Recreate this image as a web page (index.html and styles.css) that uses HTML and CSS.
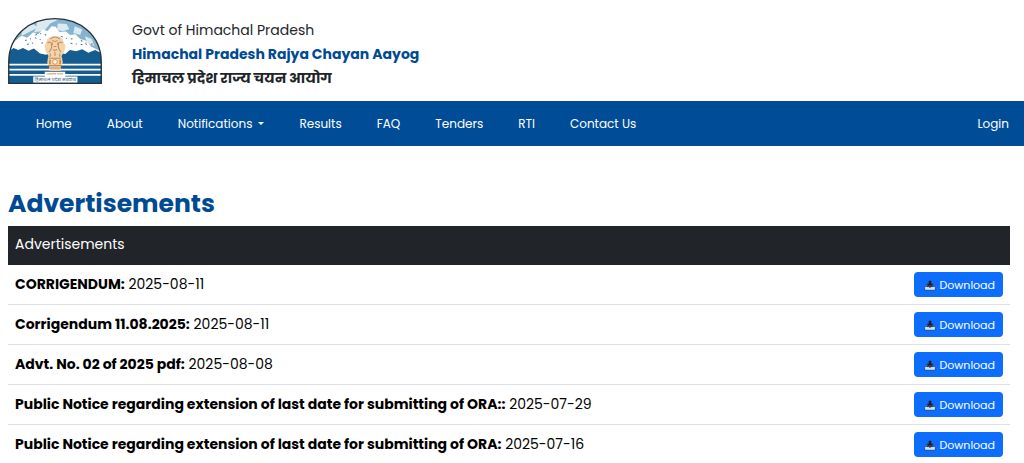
FILE: index.html
```html
<!DOCTYPE html>
<html lang="en">
<head>
<meta charset="utf-8">
<meta name="viewport" content="width=device-width, initial-scale=1">
<title>Himachal Pradesh Rajya Chayan Aayog</title>
<link rel="stylesheet" href="styles.css">
</head>
<body>
<svg class="symbols" aria-hidden="true">
  <symbol id="tray" viewBox="0 0 36 36">
    <path d="M8 18h20l6 7v6q0 3-3 3H5q-3 0-3-3v-6z" fill="#a5d3f8" stroke="#17305c" stroke-width="2" stroke-linejoin="round"/>
    <path d="M4 25h28v6H4z" fill="#c2e4fb"/>
    <path d="M9 19h18l3 5H6z" fill="#2b3a5c"/>
    <path d="M14 5h8v9h6L18 24 8 14h6z" fill="#231a30"/>
    <path d="M18 19v8" stroke="#7c3a58" stroke-width="4"/>
  </symbol>
</svg>
<header class="masthead">
  <svg class="logo" viewBox="0 0 276 194" role="img" aria-label="Government of Himachal Pradesh emblem">
    <defs><clipPath id="arch"><path d="M2 192V130C2 50 65 2 138 2S274 50 274 130V192Z"/></clipPath></defs>
    <g clip-path="url(#arch)">
      <path fill="#86b3cf" d="M0 0h276v194H0z"/>
      <path fill="#dce9f0" d="M40 30l34-12 14 10-20 10-28 14zM84 8l42-8 24 4-26 12-18 22-30 4 8-14zM146 16l26 2 8 14-20 8-16-6zM196 24l22 10-6 16-20-6zM226 54l20 8 8 20-22-8z"/>
      <path fill="#fff" d="M0 92 22 66 40 52 56 58 74 42 88 48 102 34 116 38 128 24 140 26 152 42 170 40 182 50 198 48 212 62 228 66 244 84 276 100V122H0z"/>
      <path fill="#155c91" d="M0 100 16 88 30 94 44 88 60 96 76 90 94 104 112 108 130 98 168 106 182 94 200 98 218 92 236 102 256 94 276 104V194H0z"/>
      <path fill="none" stroke="#4a6e86" stroke-width="3" stroke-dasharray="5 10 3 12" d="M50 66l28-8 18 6M80 50l22-6 18 12M156 54l22 8 22-2M184 74l28 4 40-2M56 78l22-6M214 66l26 14M98 74l14-4"/>
      <path stroke="#fff" stroke-width="5" d="M0 137h276M0 152h276M0 167h276"/>
      <path fill="#f1d3ae" d="M113 70c2-12 12-16 25-16s23 4 25 16l6 12-4 18-8 12 2 6 2 14-6 8v16H121v-16l-6-8 2-14 2-6-8-12-4-18z"/>
      <path fill="none" stroke="#c98a50" stroke-width="3" d="M124 62q14-12 28 0M116 74q10-8 12 4t-8 22M160 74q-10-8-12 4t8 22M130 66q8 6 16 0M130 72v8M146 72v8M134 84h8M132 92q6 6 12 0M124 104v10M152 104v10M138 100v12M120 118h36M116 140h44M124 147h28"/>
      <circle cx="138" cy="129" r="7" fill="#fff0d9" stroke="#c07c43" stroke-width="2"/>
      <path d="M123 123v13M153 123v13" stroke="#c98a50" stroke-width="5"/>
      <path fill="#fff" d="M108 158h60v14h36v18H74v-18h34z"/>
      <text class="logo-motto" x="138" y="169" text-anchor="middle">सत्यमेव जयते</text>
      <text class="logo-name" x="139" y="185" text-anchor="middle">हिमाचल प्रदेश सरकार</text>
    </g>
    <path d="M2 192V130C2 50 65 2 138 2S274 50 274 130V192Z" fill="none" stroke="#25323b" stroke-width="4"/>
  </svg>
  <div class="titles">
    <p class="govt">Govt of Himachal Pradesh</p>
    <p class="name">Himachal Pradesh Rajya Chayan Aayog</p>
    <p class="name-hi" lang="hi">हिमाचल प्रदेश राज्य चयन आयोग</p>
  </div>
</header>
<nav class="navbar">
  <a href="#">Home</a>
  <a href="#">About</a>
  <a href="#" class="dropdown">Notifications</a>
  <a href="#">Results</a>
  <a href="#">FAQ</a>
  <a href="#">Tenders</a>
  <a href="#">RTI</a>
  <a href="#">Contact Us</a>
  <a href="#" class="login">Login</a>
</nav>
<main class="content">
  <h1>Advertisements</h1>
  <table class="notices">
    <thead><tr><th colspan="2" scope="col">Advertisements</th></tr></thead>
    <tbody>
      <tr><td><b>CORRIGENDUM:</b> 2025-08-11</td><td class="action"><a class="btn" href="#"><svg class="icon" aria-hidden="true"><use href="#tray"/></svg>Download</a></td></tr>
      <tr><td><b>Corrigendum 11.08.2025:</b> 2025-08-11</td><td class="action"><a class="btn" href="#"><svg class="icon" aria-hidden="true"><use href="#tray"/></svg>Download</a></td></tr>
      <tr><td><b>Advt. No. 02 of 2025 pdf:</b> 2025-08-08</td><td class="action"><a class="btn" href="#"><svg class="icon" aria-hidden="true"><use href="#tray"/></svg>Download</a></td></tr>
      <tr><td><b>Public Notice regarding extension of last date for submitting of ORA::</b> 2025-07-29</td><td class="action"><a class="btn" href="#"><svg class="icon" aria-hidden="true"><use href="#tray"/></svg>Download</a></td></tr>
      <tr><td><b>Public Notice regarding extension of last date for submitting of ORA:</b> 2025-07-16</td><td class="action"><a class="btn" href="#"><svg class="icon" aria-hidden="true"><use href="#tray"/></svg>Download</a></td></tr>
    </tbody>
  </table>
</main>
</body>
</html>
```
FILE: styles.css
```css
* { box-sizing: border-box; }
body {
  margin: 0;
  background: #fff;
  color: #212529;
  font-family: Poppins, Inter, "Noto Sans Devanagari", "Noto Sans", sans-serif;
  font-size: 14px;
  line-height: 24px;
}
.symbols { position: absolute; width: 0; height: 0; }
.masthead { display: flex; align-items: flex-start; gap: 30px; padding: 18px 8px 11px; }
.logo { flex: none; width: 94px; height: 66px; }
.logo-motto { font-size: 8px; fill: #b96b32; }
.logo-name { font-size: 13px; font-weight: 500; fill: #4d7189; }
.titles p { margin: 0; }
.name { color: #004a93; font-weight: 700; }
.name-hi { font-weight: 700; }
.navbar {
  display: flex;
  align-items: center;
  gap: 35px;
  padding: 11px 15px 10px 36px;
  background: #004c97;
  font-size: 12px;
}
.navbar a { color: #fff; text-decoration: none; }
.dropdown::after {
  content: "";
  display: inline-block;
  margin-left: 6px;
  vertical-align: 3px;
  border: 3px solid transparent;
  border-top-color: #fff;
  border-bottom: 0;
}
.navbar .login { margin-left: auto; }
.content { padding: 42px 14px 0 8px; }
h1 { margin: 0 0 6px; color: #004a93; font-size: 25px; line-height: 32px; font-weight: 700; }
.notices { width: 100%; border-collapse: separate; border-spacing: 0; color: #000; }
.notices th { height: 39px; padding: 0 7px 3px; background: #212529; color: #fff; font-weight: 400; text-align: left; }
.notices td { height: 40px; padding: 0 7px 2px; border-bottom: 1px solid #dee2e6; }
.notices .action { padding-bottom: 0; text-align: right; }
.btn {
  display: inline-flex;
  align-items: center;
  gap: 4px;
  height: 25px;
  padding: 0 8px 0 10px;
  border-radius: 4px;
  background: #0d6efd;
  color: #fff;
  font-size: 11px;
  text-decoration: none;
  vertical-align: middle;
}
.icon { width: 12px; height: 12px; }
```
